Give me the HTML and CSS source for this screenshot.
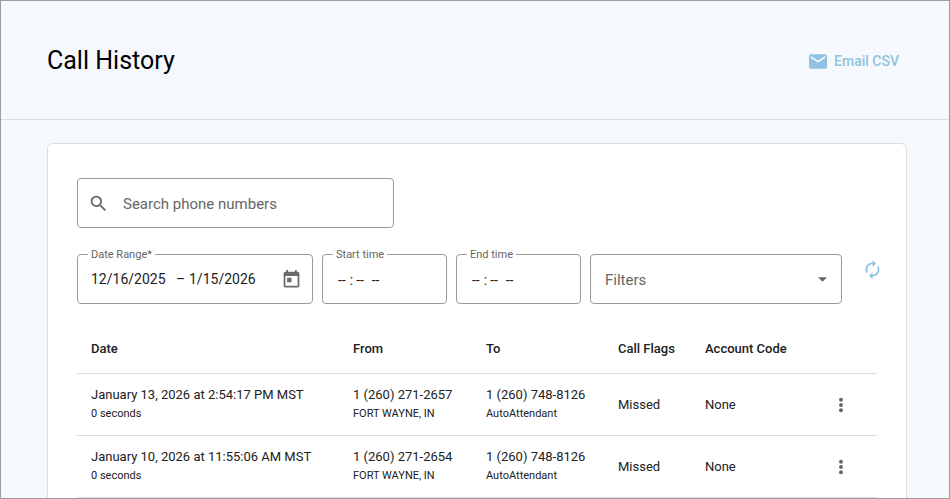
FILE: index.html
```
<!DOCTYPE html>
<html lang="en">
<head>
<meta charset="utf-8">
<meta name="viewport" content="width=device-width, initial-scale=1">
<title>Call History</title>
<link rel="stylesheet" href="styles.css">
</head>
<body>
<header class="page-header">
  <h1 class="page-title">Call History</h1>
  <button class="email-button" type="button">
    <svg class="icon-mail" viewBox="2 4 20 16" aria-hidden="true"><path d="M20 4H4c-1.1 0-2 .9-2 2v12c0 1.100.9 2 2 2h16c1.100 0 2-.9 2-2V6c0-1.100-.9-2-2-2zm0 4-8 5-8-5V6l8 5 8-5v2z"/></svg>
    Email CSV
  </button>
</header>
<main class="card">
  <div class="field search">
    <svg class="icon-search" viewBox="0 0 24 24" aria-hidden="true"><path d="M15.500 14h-.79l-.28-.27A6.470 6.470 0 0 0 16 9.500 6.500 6.500 0 1 0 9.500 16c1.610 0 3.090-.59 4.230-1.570l.27.28v.79l5 4.990L20.490 19l-4.990-5zm-6 0C7.010 14 5 11.990 5 9.500S7.010 5 9.500 5 14 7.010 14 9.500 11.990 14 9.500 14z"/></svg>
    <input class="input search-input" type="search" placeholder="Search phone numbers" aria-label="Search phone numbers">
  </div>
  <div class="filters">
    <div class="field date-range">
      <label class="field-label" for="start-date">Date Range*</label>
      <input class="input date-start" id="start-date" type="text" value="12/16/2025">
      <span class="dash">–</span>
      <input class="input date-end" type="text" value="1/15/2026" aria-label="End date">
      <button class="icon-button calendar" type="button" aria-label="Open calendar">
        <svg viewBox="0 0 24 24" aria-hidden="true"><path d="M19 3h-1V1h-2v2H8V1H6v2H5c-1.110 0-1.990.9-1.990 2L3 19c0 1.100.89 2 2 2h14c1.100 0 2-.9 2-2V5c0-1.100-.9-2-2-2zm0 16H5V8h14v11zM7 10h5v5H7z"/></svg>
      </button>
    </div>
    <div class="field time">
      <label class="field-label" for="start-time">Start time</label>
      <input class="input time-input" id="start-time" type="time">
    </div>
    <div class="field time">
      <label class="field-label" for="end-time">End time</label>
      <input class="input time-input" id="end-time" type="time">
    </div>
    <div class="field filter-select">
      <select class="select" aria-label="Filters"><option>Filters</option></select>
      <svg class="icon-arrow" viewBox="0 0 10 5" aria-hidden="true"><path d="M0 0l5 5 5-5z"/></svg>
    </div>
    <button class="icon-button refresh" type="button" aria-label="Refresh">
      <svg viewBox="0 0 24 24" aria-hidden="true"><path d="M12 6v3l4-4-4-4v3c-4.420 0-8 3.580-8 8 0 1.570.46 3.030 1.240 4.260L6.700 14.800A5.870 5.870 0 0 1 6 12c0-3.310 2.690-6 6-6zm6.760 1.740L17.300 9.200c.44.84.7 1.790.7 2.800 0 3.310-2.690 6-6 6v-3l-4 4 4 4v-3c4.420 0 8-3.580 8-8 0-1.570-.46-3.030-1.240-4.260z"/></svg>
    </button>
  </div>
  <table class="calls">
    <colgroup><col><col class="col-from"><col class="col-to"><col class="col-flags"><col class="col-account"><col class="col-actions"></colgroup>
    <thead>
      <tr><th>Date</th><th>From</th><th>To</th><th>Call Flags</th><th>Account Code</th><th></th></tr>
    </thead>
    <tbody>
      <tr>
        <td>January 13, 2026 at 2:54:17 PM MST<small>0 seconds</small></td>
        <td>1 (260) 271-2657<small>FORT WAYNE, IN</small></td>
        <td>1 (260) 748-8126<small>AutoAttendant</small></td>
        <td>Missed</td>
        <td>None</td>
        <td><button class="icon-button more" type="button" aria-label="More options"><svg viewBox="0 0 24 24" aria-hidden="true"><circle cx="12" cy="5" r="2.600"/><circle cx="12" cy="12" r="2.600"/><circle cx="12" cy="19" r="2.600"/></svg></button></td>
      </tr>
      <tr>
        <td>January 10, 2026 at 11:55:06 AM MST<small>0 seconds</small></td>
        <td>1 (260) 271-2654<small>FORT WAYNE, IN</small></td>
        <td>1 (260) 748-8126<small>AutoAttendant</small></td>
        <td>Missed</td>
        <td>None</td>
        <td><button class="icon-button more" type="button" aria-label="More options"><svg viewBox="0 0 24 24" aria-hidden="true"><circle cx="12" cy="5" r="2.600"/><circle cx="12" cy="12" r="2.600"/><circle cx="12" cy="19" r="2.600"/></svg></button></td>
      </tr>
    </tbody>
  </table>
</main>
</body>
</html>
```
FILE: styles.css
```
* {
  box-sizing: border-box;
}

body {
  height: 100vh;
  margin: 0;
  overflow: hidden;
  border: 1px solid #9d9d9d;
  background: #f5f9fd;
  color: #212121;
  font-family: Roboto, "Liberation Sans", sans-serif;
  font-size: 13px;
}

button,
input,
select {
  font: inherit;
  color: inherit;
}

.page-header {
  display: flex;
  align-items: center;
  justify-content: space-between;
  padding: 43px 50px 41px 46px;
  border-bottom: 1px solid #d9dce0;
}

.page-title {
  margin: 0;
  color: #000;
  font-size: 25px;
  font-weight: 400;
  line-height: 34px;
}

.email-button {
  display: flex;
  align-items: center;
  gap: 7px;
  padding: 0;
  border: 0;
  background: none;
  color: #90c2e2;
  font-size: 14px;
  font-weight: 500;
}

.icon-mail {
  width: 18px;
  height: 15px;
  fill: currentColor;
}

.card {
  margin: 23px 42px 0 46px;
  padding: 34px 29px;
  border: 1px solid #dcdcdc;
  border-radius: 6px;
  background: #fff;
}

.field {
  position: relative;
  display: flex;
  align-items: center;
  height: 50px;
  border: 1px solid #9b9b9b;
  border-radius: 4px;
}

.field-label {
  position: absolute;
  top: -7px;
  left: 10px;
  padding: 0 3px;
  background: #fff;
  color: #666;
  font-size: 11px;
  line-height: 14px;
}

.input {
  min-width: 0;
  padding: 0;
  border: 0;
  outline: 0;
  background: none;
  font-size: 14px;
}

.search {
  width: 317px;
  max-width: 100%;
  gap: 14px;
  padding: 0 10px;
}

.search-input {
  flex: 1;
  padding-top: 2px;
  font-size: 15px;
}

.search-input::placeholder {
  color: #666;
  opacity: 1;
}

.icon-search {
  width: 21px;
  height: 21px;
  fill: #666;
}

.filters {
  display: flex;
  gap: 9px;
  margin-top: 26px;
}

.date-range {
  width: 236px;
  padding: 0 9px 0 13px;
}

.date-start {
  width: 85px;
}

.dash {
  width: 13px;
  font-size: 14px;
}

.date-end {
  flex: 1;
}

.icon-button {
  display: flex;
  align-items: center;
  justify-content: center;
  padding: 0;
  border: 0;
  background: none;
}

.icon-button svg {
  fill: currentColor;
}

.calendar {
  width: 24px;
  height: 24px;
  color: #6b6b6b;
}

.calendar svg {
  width: 21px;
  height: 21px;
}

.time {
  width: 125px;
  padding: 2px 14px 0;
}

.time-input::-webkit-calendar-picker-indicator {
  display: none;
}

.time-input::-webkit-datetime-edit-hour-field {
  padding: 0 4px 0 1px;
}

.time-input::-webkit-datetime-edit-minute-field {
  padding: 0 3px;
}

.time-input::-webkit-datetime-edit-ampm-field {
  padding: 0 3px;
}

.filter-select {
  flex: 1;
}

.select {
  width: 100%;
  height: 100%;
  padding: 2px 14px 0;
  border: 0;
  outline: 0;
  appearance: none;
  background: none;
  color: #666;
  font-size: 15px;
}

.icon-arrow {
  position: absolute;
  right: 14px;
  width: 9px;
  height: 5px;
  fill: #666;
  pointer-events: none;
}

.refresh {
  width: 26px;
  height: 30px;
  margin: 0 -8px 0 8px;
  color: #90c2e2;
}

.refresh svg {
  width: 21px;
  height: 21px;
}

.calls {
  width: 100%;
  margin-top: 21px;
  border-collapse: separate;
  border-spacing: 0;
  table-layout: fixed;
}

.col-from {
  width: 133px;
}

.col-to {
  width: 132px;
}

.col-flags {
  width: 87px;
}

.col-account {
  width: 114px;
}

.col-actions {
  width: 72px;
}

th,
td {
  padding: 0 0 0 14px;
  border-bottom: 1px solid #dedede;
  text-align: left;
  white-space: nowrap;
}

th {
  height: 49px;
  padding-bottom: 2px;
  font-weight: 500;
}

td {
  height: 62px;
  line-height: 18px;
}

td:last-child {
  padding: 0;
}

small {
  display: block;
  padding-top: 1px;
  font-size: 11px;
}

.more {
  width: 100%;
  color: #666;
}

.more svg {
  width: 18px;
  height: 18px;
}
```
